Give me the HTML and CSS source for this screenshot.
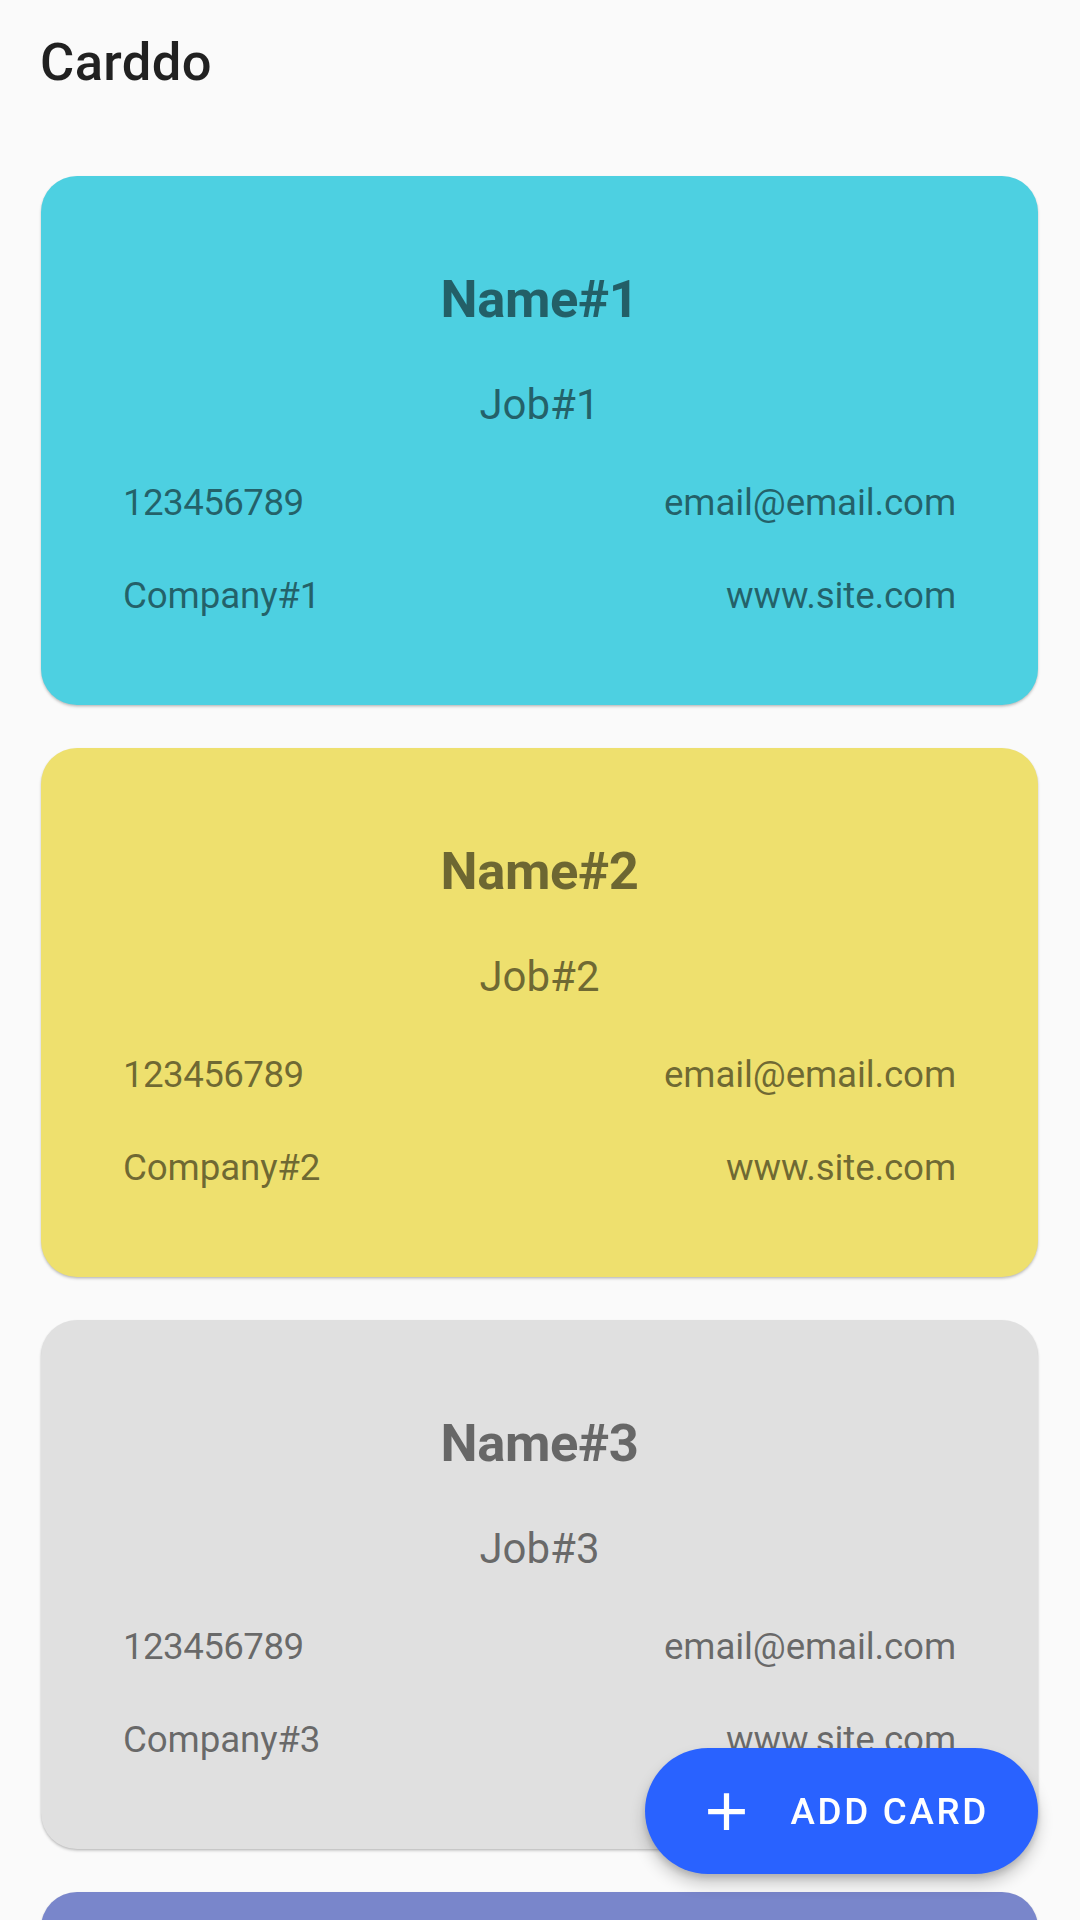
FILE: index.html
```html
<!DOCTYPE html>
<html>
<head>
<meta charset="utf-8">
<link rel="stylesheet" href="styles.css">
</head>
<body>
<header class="toolbar"><h1 class="title">Carddo</h1></header>
<main class="list">
  <section class="card card-cyan">
    <div class="name">Name#1</div>
    <div class="job">Job#1</div>
    <div class="row row-first"><span class="phone">123456789</span><span>email@email.com</span></div>
    <div class="row row-second"><span>Company#1</span><span>www.site.com</span></div>
  </section>
  <section class="card card-yellow">
    <div class="name">Name#2</div>
    <div class="job">Job#2</div>
    <div class="row row-first"><span class="phone">123456789</span><span>email@email.com</span></div>
    <div class="row row-second"><span>Company#2</span><span>www.site.com</span></div>
  </section>
  <section class="card card-grey">
    <div class="name">Name#3</div>
    <div class="job">Job#3</div>
    <div class="row row-first"><span class="phone">123456789</span><span>email@email.com</span></div>
    <div class="row row-second"><span>Company#3</span><span>www.site.com</span></div>
  </section>
  <section class="card card-indigo"></section>
</main>
<button class="fab">
  <svg class="fab-icon" viewBox="0 0 24 24" width="63" height="63"><path d="M19 13h-6v6h-2v-6H5v-2h6V5h2v6h6v2z" fill="#ffffff"/></svg>
  <span class="fab-label">ADD CARD</span>
</button>
</body>
</html>
```
FILE: styles.css
```css
html, body {
  margin: 0;
  padding: 0;
}
body {
  width: 1080px;
  height: 1920px;
  overflow: hidden;
  background: #fafafa;
  font-family: Roboto, "Noto Sans", "Liberation Sans", sans-serif;
}
.toolbar {
  height: 147px;
  box-sizing: border-box;
  padding: 36px 0 0 40px;
}
.title {
  margin: 0;
  font-size: 52.5px;
  line-height: 52.5px;
  font-weight: 500;
  letter-spacing: 0.4px;
  color: rgba(0, 0, 0, 0.87);
}
.list {
  padding-top: 29px;
}
.card {
  margin: 0 42px 43px 41px;
  height: 529px;
  box-sizing: border-box;
  padding: 97px 82px 0;
  border-radius: 36px;
  color: rgba(0, 0, 0, 0.54);
  box-shadow: 0 2px 3px rgba(0, 0, 0, 0.16), 0 1px 2px rgba(0, 0, 0, 0.1);
}
.card-cyan { background: #4dd0e1; }
.card-yellow { background: #eee06e; }
.card-grey { background: #e0e0e0; }
.card-indigo { background: #7986cb; }
.name {
  text-align: center;
  font-size: 52.5px;
  line-height: 52.5px;
  font-weight: 700;
  letter-spacing: -0.4px;
}
.job {
  margin-top: 58px;
  text-align: center;
  font-size: 42px;
  line-height: 42px;
}
.row {
  display: flex;
  justify-content: space-between;
  font-size: 36.75px;
  line-height: 36.75px;
  letter-spacing: -0.15px;
}
.phone {
  letter-spacing: -0.6px;
}
.row-first { margin-top: 59px; }
.row-second { margin-top: 57px; }
.fab {
  position: fixed;
  right: 42px;
  bottom: 46px;
  height: 126px;
  box-sizing: border-box;
  padding: 0 49px 0 50px;
  border: none;
  border-radius: 63px;
  background: #2962ff;
  display: flex;
  align-items: center;
  gap: 32px;
  box-shadow: 0 10px 16px rgba(0, 0, 0, 0.2), 0 4px 6px rgba(0, 0, 0, 0.14);
  font-family: Roboto, "Noto Sans", "Liberation Sans", sans-serif;
}
.fab-icon {
  display: block;
  flex: none;
}
.fab-label {
  color: #ffffff;
  font-size: 36.75px;
  font-weight: 500;
  letter-spacing: 2.7px;
}
```
